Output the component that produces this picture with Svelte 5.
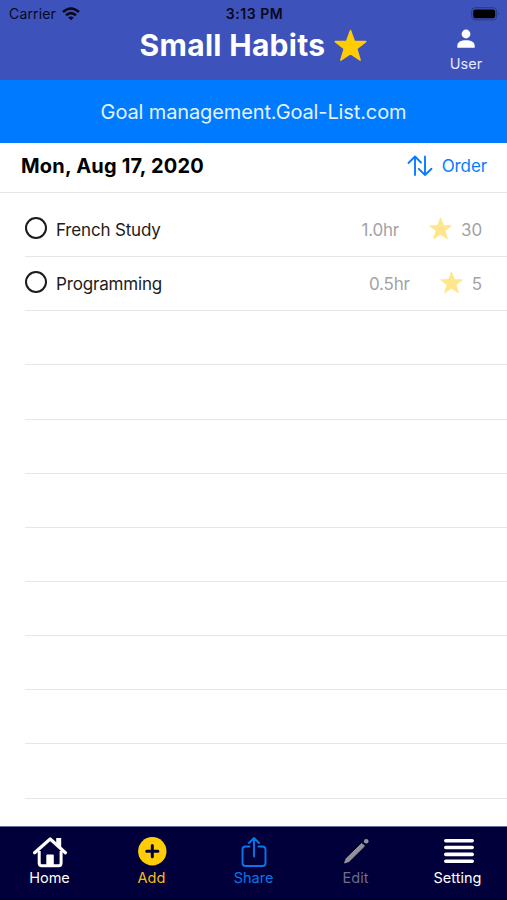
<script>
  const habits = [
    { name: 'French Study', time: '1.0hr', stars: 30 },
    { name: 'Programming', time: '0.5hr', stars: 5 }
  ]

  const emptyRows = Array(9)

  const tabs = ['Home', 'Add', 'Share', 'Edit', 'Setting']
</script>

{#snippet star()}
  <svg class="star" viewBox="0 0 32 32">
    <path d="M16 1.5 L19.8 11.8 L30.8 12.2 L22.1 19 L25.4 30.2 L16 23.8 L6.6 30.2 L9.9 19 L1.2 12.2 L12.2 11.8 Z" />
  </svg>
{/snippet}

<div class="screen">
  <header>
    <div class="status">
      <div class="carrier">
        <span>Carrier</span>
        <svg width="18" height="14" viewBox="0 0 18 14" fill="none" stroke="#08091a" stroke-width="2.5">
          <path d="M1 5 Q9 -2 17 5" />
          <path d="M4 8.3 Q9 4 14 8.3" />
          <path d="M6.2 10.5 Q9 8.4 11.8 10.5 L9 13.3 Z" fill="#08091a" stroke="none" />
        </svg>
      </div>
      <span class="clock">3:13 PM</span>
      <svg class="battery" width="30" height="14" viewBox="0 0 30 14">
        <rect x="0.7" y="0.7" width="25" height="12.2" rx="3.5" fill="none" stroke="#2b397f" stroke-width="1" />
        <rect x="2.2" y="2.4" width="22" height="8.8" rx="2.2" fill="#000" />
        <path d="M27.3 5 Q29 6.8 27.3 8.6 Z" fill="#2b397f" />
      </svg>
    </div>
    <div class="title-bar">
      <h1><span>Small Habits</span>{@render star()}</h1>
      <div class="user">
        <svg width="18" height="20" viewBox="0 0 18 20" fill="#fff">
          <circle cx="9" cy="5" r="4.4" />
          <path d="M0.3 18.8 V17 C0.3 13 4 11.3 9 11.3 S17.7 13 17.7 17 V18.8 Z" />
        </svg>
        <span>User</span>
      </div>
    </div>
  </header>

  <div class="banner"><span>Goal management.Goal-List.com</span></div>

  <div class="date-bar">
    <h2>Mon, Aug 17, 2020</h2>
    <div class="order">
      <svg width="26" height="22" viewBox="0 0 26 22" fill="none" stroke="#0a7aff" stroke-width="1.9" stroke-linecap="round" stroke-linejoin="round">
        <path d="M8 20 V2 M1.5 8 L8 1.5 L14 7.5" />
        <path d="M18 1.5 V20 M11.8 13.8 L18 20 L24.5 13.8" />
      </svg>
      <span>Order</span>
    </div>
  </div>

  <ul>
    {#each habits as habit (habit.name)}
      <li>
        <span class="check"></span>
        <span class="name">{habit.name}</span>
        <span class="time">{habit.time}</span>
        {@render star()}
        <span class="count">{habit.stars}</span>
      </li>
    {/each}
    {#each emptyRows as _}
      <li></li>
    {/each}
  </ul>

  <nav>
    {#each tabs as tab}
      <div class="tab {tab.toLowerCase()}">
        <svg width="36" height="32" viewBox="0 0 36 32">
          {#if tab === 'Home'}
            <path d="M7.2 14 V26 Q7.2 28.7 9.7 28.7 H26.6 Q29.1 28.7 29.1 26 V14" fill="none" stroke="#fff" stroke-width="3" />
            <path d="M2.6 15.7 L18.2 2 L33.4 15.7" fill="none" stroke="#fff" stroke-width="3.2" stroke-linecap="round" stroke-linejoin="round" />
            <path d="M24.2 1 H29.2 V12 L24.2 8 Z M14.3 29 V18.5 Q14.3 17.5 15.3 17.5 H20.8 Q21.8 17.5 21.8 18.5 V29 Z" fill="#fff" />
          {:else if tab === 'Add'}
            <circle cx="18.3" cy="14.2" r="14.2" fill="#ffcc05" />
            <path d="M18.3 8.6 V19.8 M12.7 14.2 H23.9" stroke="#02003b" stroke-width="3" stroke-linecap="round" />
          {:else if tab === 'Share'}
            <path d="M13.5 9.5 H9.5 Q6.5 9.5 6.5 12.5 V26 Q6.5 29 9.5 29 H26.5 Q29.5 29 29.5 26 V12.5 Q29.5 9.5 26.5 9.5 H22.5 M18 19.5 V1.5 M13 6 L18 1 L23 6" fill="none" stroke="#0875e8" stroke-width="1.9" stroke-linecap="round" stroke-linejoin="round" />
          {:else if tab === 'Edit'}
            <path d="M6.6 26 L8.2 21.6 L23.8 6.4 L26.5 9.1 L11 24.4 Z" fill="#929298" stroke="#929298" stroke-width="1" stroke-linejoin="round" />
            <circle cx="28.2" cy="4.3" r="2.3" fill="#929298" />
          {:else}
            <path d="M5.8 3.7 H32.2 M5.8 10.5 H32.2 M5.8 17.4 H32.2 M5.8 24.2 H32.2" stroke="#fff" stroke-width="3.6" stroke-linecap="round" />
          {/if}
        </svg>
        <span>{tab}</span>
      </div>
    {/each}
  </nav>
</div>

<style>
  :global(body) {
    margin: 0;
    background: #fff;
  }

  .screen {
    display: flex;
    flex-direction: column;
    height: 900px;
    overflow: hidden;
    font-family: Inter, "Liberation Sans", sans-serif;
    color: #000;
  }

  svg {
    display: block;
    flex: none;
  }

  .star {
    fill: #ffcc05;
    stroke: #ffcc05;
    stroke-width: 1.4;
    stroke-linejoin: round;
  }

  header {
    box-sizing: border-box;
    height: 80px;
    background: #3e52bb;
  }

  .status {
    display: grid;
    grid-template-columns: 1fr auto 1fr;
    align-items: center;
    height: 27px;
    padding: 0 7px 0 9px;
    font-size: 14px;
    color: #08091a;
  }

  .carrier {
    display: flex;
    align-items: center;
    gap: 6px;
    letter-spacing: 0.15px;
  }

  .clock {
    font-weight: 600;
    font-size: 14px;
    letter-spacing: 0.55px;
  }

  .battery {
    justify-self: end;
    margin-right: -1px;
  }

  .title-bar {
    display: grid;
    grid-template-columns: 1fr auto 1fr;
    height: 53px;
  }

  h1 {
    grid-column: 2;
    display: flex;
    align-items: center;
    gap: 9px;
    height: 36px;
    margin: 0;
    font-size: 30px;
    font-weight: 700;
    letter-spacing: 0.3px;
    color: #fff;
  }

  h1 :global(.star) {
    width: 33px;
    height: 33px;
  }

  .user {
    display: flex;
    flex-direction: column;
    align-items: center;
    justify-self: end;
    width: 82px;
    padding-top: 2px;
    font-size: 14.5px;
    line-height: 18px;
    color: #e6e9ff;
  }

  .user span {
    margin-top: 6px;
  }

  .banner {
    display: flex;
    align-items: center;
    justify-content: center;
    height: 63px;
    background: #007aff;
    font-size: 20px;
    letter-spacing: -0.12px;
    color: #e2f3ff;
  }

  .date-bar {
    box-sizing: border-box;
    display: flex;
    justify-content: space-between;
    align-items: center;
    height: 50px;
    padding: 0 20px 4px 21px;
    border-bottom: 1px solid #e6e6e6;
  }

  h2 {
    margin: 0;
    font-size: 20px;
    font-weight: 700;
    letter-spacing: 0.2px;
  }

  .order {
    display: flex;
    align-items: center;
    gap: 9px;
    font-size: 17px;
    letter-spacing: -0.1px;
    color: #0a7aff;
  }

  ul {
    flex: 1;
    margin: 0;
    padding: 10px 0 0 25px;
    list-style: none;
  }

  li {
    box-sizing: border-box;
    display: flex;
    align-items: center;
    height: 54.15px;
    padding-right: 25px;
    border-bottom: 1px solid #e6e6e6;
    font-size: 17px;
    letter-spacing: -0.17px;
  }

  .check {
    box-sizing: border-box;
    width: 22px;
    height: 22px;
    margin: 0 9px 3px 0;
    border: 2px solid #1c1c1c;
    border-radius: 50%;
  }

  .name {
    flex: 1;
    color: #1c1c1c;
  }

  .time,
  .count {
    color: #a3a3a3;
  }

  .time {
    margin-right: 30px;
  }

  li :global(.star) {
    width: 23px;
    height: 23px;
    margin: 0 9px 2px 0;
    fill: #ffe68c;
    stroke: #ffe68c;
  }

  nav {
    display: grid;
    grid-template-columns: repeat(5, 102px);
    justify-content: center;
    box-sizing: border-box;
    height: 74px;
    padding-top: 10px;
    background: #02003b;
    border-top: 1px solid #6b6d9e;
    border-bottom: 1px solid #000018;
  }

  .tab {
    display: flex;
    flex-direction: column;
    align-items: center;
    font-size: 14.5px;
    line-height: 18px;
    color: #fff;
  }

  .add {
    color: #f5be12;
  }

  .share {
    color: #0875e8;
  }

  .edit {
    color: #6f6e86;
  }
</style>
